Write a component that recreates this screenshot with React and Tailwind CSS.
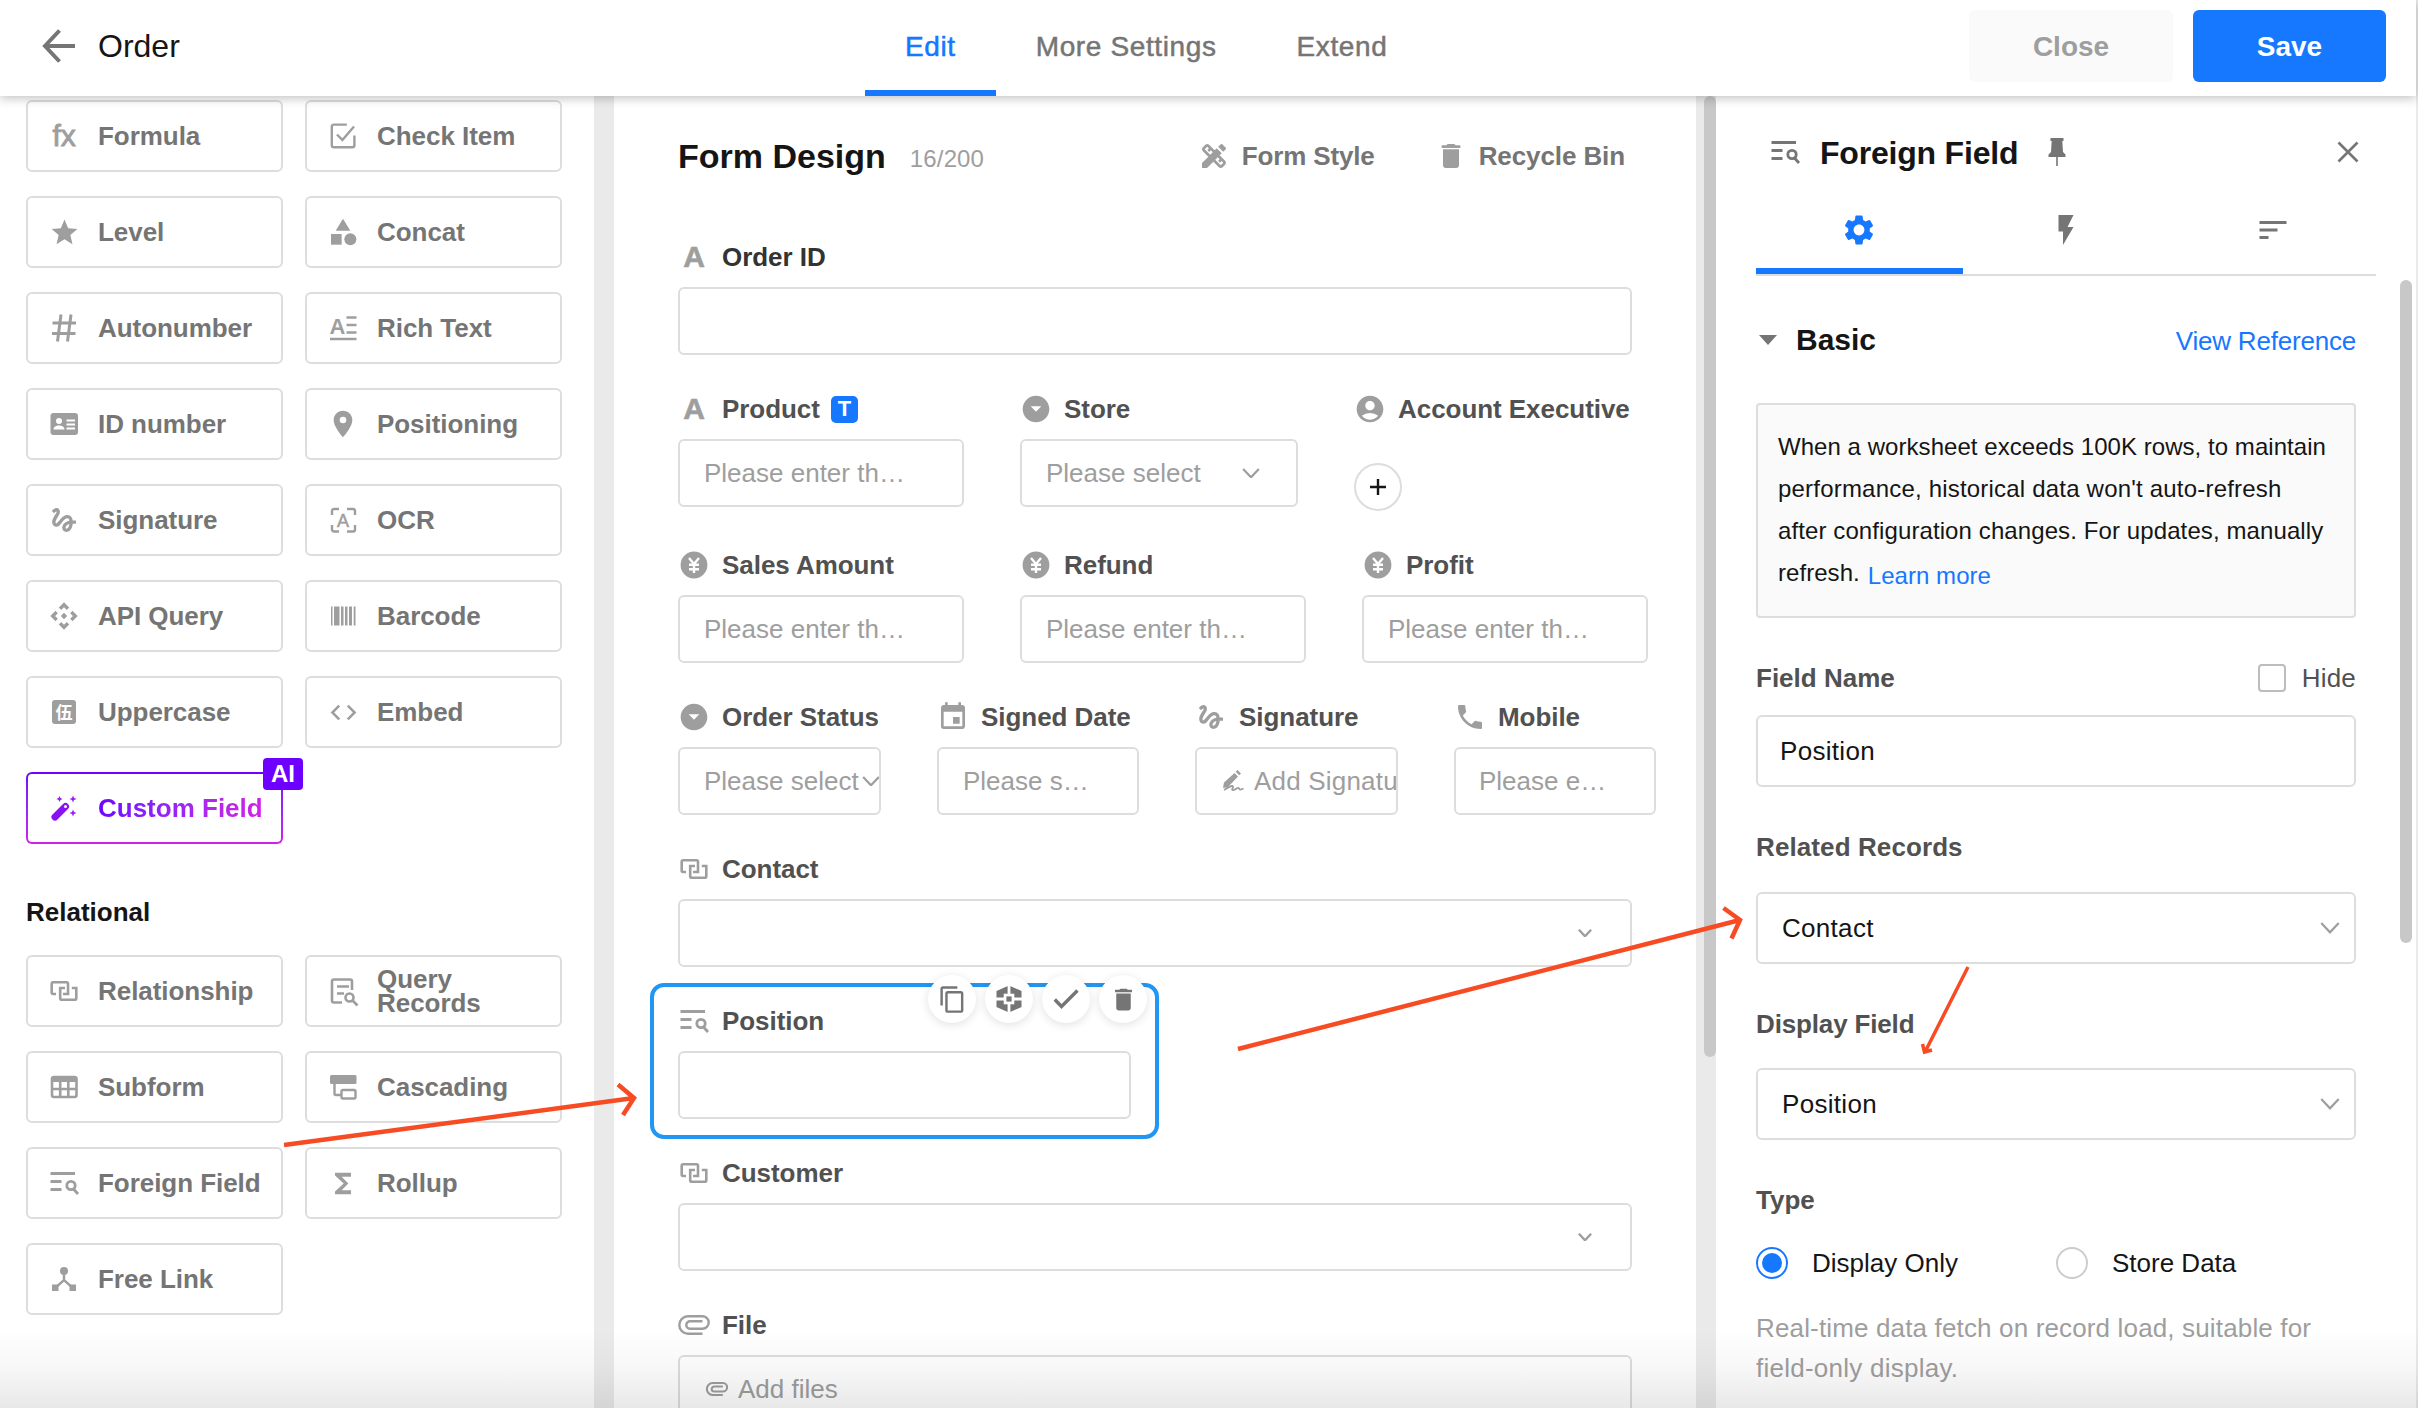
import React, { useState } from "react";
import clsx from "clsx";
import {
  MdAccountCircle,
  MdArrowDropDownCircle,
  MdCategory,
  MdCode,
  MdContentCopy,
  MdDelete,
  MdDesignServices,
  MdEvent,
  MdFlashOn,
  MdFunctions,
  MdGesture,
  MdPhone,
  MdPlace,
  MdSettings,
  MdSort,
  MdStar,
} from "react-icons/md";

const Svg = ({ w = 32, h = 32, children, ...rest }) => (
  <svg width={w} height={h} viewBox={`0 0 ${w} ${h}`} fill="none" stroke="currentColor" strokeWidth="2.6" className="shrink-0" {...rest}>
    {children}
  </svg>
);

const FxIcon = () => <span className="text-[30px] leading-8 [-webkit-text-stroke:0.9px]">fx</span>;

const LetterIcon = () => <span className="text-[30px] leading-8 font-bold [-webkit-text-stroke:0.6px]">A</span>;

const CheckItemIcon = () => (
  <Svg strokeWidth="2.4">
    <path d="M20 5.2H7a2 2 0 0 0-2 2v18.600a2 2 0 0 0 2 2h18.600a2 2 0 0 0 2-2V16" transform="translate(-.2 -.6)" />
    <path d="M10 14.500l5.400 5.500L27 6.500" />
  </Svg>
);

const HashIcon = () => (
  <Svg strokeWidth="3">
    <path d="M13 2.500l-3.500 27M23 2.500l-3.500 27M4.500 11h23.500M4 21.500h23.500" />
  </Svg>
);

const RichTextIcon = () => (
  <Svg>
    <text x="2.500" y="22" fontSize="22" fontWeight="bold" fill="currentColor" stroke="none">A</text>
    <path d="M19.500 5.500h10M19.500 13h10M19.500 20.500h10M3 27h26.500" />
  </Svg>
);

const IdIcon = () => (
  <Svg stroke="none">
    <rect x="2.500" y="5" width="27.500" height="22" rx="3" fill="currentColor" />
    <circle cx="11" cy="13" r="3" fill="#fff" />
    <path d="M5.500 21.500c0-5.300 11-5.300 11 0z" fill="#fff" />
    <path d="M18.500 12.500H27M18.500 16.500H27M18.500 20.500H27" stroke="#fff" strokeWidth="1.800" />
  </Svg>
);

const OcrIcon = () => (
  <Svg strokeWidth="2.4">
    <path d="M12 5H7a2 2 0 0 0-2 2v4M20 5h6a2 2 0 0 1 2 2v4M12 27.500H7a2 2 0 0 1-2-2V21M20 27.500h6a2 2 0 0 0 2-2V21" />
    <text x="10" y="22.500" fontSize="18" fill="currentColor" stroke="currentColor" strokeWidth=".5">A</text>
  </Svg>
);

const ApiIcon = () => (
  <Svg strokeWidth="3.4">
    <path d="M12 8.700l4-4 4 4M12 23.300l4 4 4-4M8.700 12l-4 4 4 4M23.300 12l4 4-4 4" />
    <path d="M16 12.800l3.200 3.200-3.200 3.200-3.200-3.200z" fill="currentColor" stroke="none" />
  </Svg>
);

const BarcodeIcon = () => (
  <Svg stroke="none" fill="currentColor">
    <path d="M4 6.500h1.500v19H4zM7 6.500h5.500v19H7zM14 6.500h2.500v19H14zM18 6.500h2.500v19H18zM22 6.500h3v19h-3zM26.700 6.500h1.800v19h-1.800z" />
  </Svg>
);

const UppercaseIcon = () => (
  <span className="flex size-6 items-center justify-center rounded-[3px] bg-[#9e9e9e] font-['Noto_Sans_CJK_SC',sans-serif] text-[17px] leading-6 font-bold text-white">
    伍
  </span>
);

const WandIcon = () => (
  <svg width="32" height="32" viewBox="0 0 32 32" className="shrink-0">
    <path d="M7 25L17.500 14.500" stroke="#8a10f5" strokeWidth="7" strokeLinecap="round" />
    <circle cx="17.500" cy="14.500" r="1.500" fill="#fff" />
    <path
      d="M11.500 4l.9 2.100L14.500 7l-2.100.9-.9 2.100-.9-2.100L8.500 7l2.100-.9zM25 3.500l1 2.500 2.500 1-2.500 1-1 2.500-1-2.500-2.500-1 2.500-1zM25 17.500l1 2.500 2.500 1-2.500 1-1 2.500-1-2.500-2.500-1 2.500-1z"
      fill="#9d18f0"
    />
  </svg>
);

const RelationIcon = () => (
  <Svg w={28} h={20} strokeWidth="2.600">
    <path d="M6 13H3.200a1.500 1.500 0 0 1-1.500-1.500V2.800a1.500 1.500 0 0 1 1.500-1.500h13.300A1.500 1.500 0 0 1 18 2.800V13h-5" />
    <path d="M15 7h-4.800v10.200a1.500 1.500 0 0 0 1.500 1.500h13.100a1.500 1.500 0 0 0 1.500-1.500V7h-4.500" />
  </Svg>
);

const QueryIcon = () => (
  <Svg strokeWidth="2.6">
    <path d="M15 27.500H7a2 2 0 0 1-2-2V6.500a2 2 0 0 1 2-2h16a2 2 0 0 1 2 2V15M10 11.500h12M10 18.500h7" />
    <circle cx="22.500" cy="22.500" r="4" />
    <path d="M25.500 25.500l5 5" />
  </Svg>
);

const GridIcon = () => (
  <Svg strokeWidth="2.600">
    <rect x="4" y="6" width="24.500" height="20" rx="2" />
    <path d="M4 8.500h24.500" strokeWidth="5" />
    <path d="M4 18h24.500M12.200 10v16M20.300 10v16" />
  </Svg>
);

const CascadeIcon = () => (
  <Svg strokeWidth="2.4">
    <rect x="3" y="4" width="26.500" height="9" rx="1.500" fill="currentColor" stroke="none" />
    <path d="M7.500 12v10.500a1.500 1.500 0 0 0 1.500 1.500h5" />
    <rect x="14.500" y="19" width="14" height="8.500" rx="1.500" />
  </Svg>
);

const ForeignIcon = () => (
  <Svg strokeWidth="2.800">
    <path d="M2.500 6.500h24.500M2.500 14.500h11M2.500 22.500h11" />
    <circle cx="23" cy="18.500" r="4.200" />
    <path d="M25.500 22l4.500 5" />
  </Svg>
);

const FreeLinkIcon = () => (
  <Svg stroke="none" fill="currentColor">
    <circle cx="16" cy="8" r="4" />
    <path d="M16 10v8.500M6 26l10-9 10 9" stroke="currentColor" strokeWidth="2.400" fill="none" />
    <path d="M4 21.500h6.500V28H4zM21.500 21.500H28V28h-6.500z" />
  </Svg>
);

const YenIcon = () => (
  <Svg stroke="none">
    <circle cx="16" cy="16" r="13.400" fill="currentColor" />
    <path d="M11 9l5 6 5-6M16 15v9M11 15.700h10M11 20.200h10" stroke="#fff" strokeWidth="2.400" />
  </Svg>
);

const ClipIcon = ({ w = 32, h = 20 }) => (
  <svg width={w} height={h} viewBox="0 0 32 20" fill="none" stroke="currentColor" strokeWidth={w < 30 ? 3 : 2.4} className="shrink-0">
    <path d="M24.500 18.700H10A8.700 8.700 0 0 1 10 1.300h14.500a6.200 6.200 0 0 1 0 12.400H12a3.700 3.700 0 0 1 0-7.400h12.500" />
  </svg>
);

const SignPenIcon = () => (
  <Svg w={24} h={24} stroke="none" fill="currentColor">
    <path d="M1 19l1-5.500L12.500 4l3.500 3.500L5.800 18.300zM13.700 2.800L15.500 1l3.500 3.500-1.800 1.800z" />
    <path d="M2 21c5-3 8-5 9-3.500s-2.500 3 0 3.500 4-3 5.500-2 .5 3 5 .5" stroke="currentColor" strokeWidth="1.800" fill="none" />
  </Svg>
);

const PinIcon = () => (
  <svg width="18" height="28" viewBox="0 0 18 28" className="shrink-0" fill="currentColor">
    <path d="M2.500 0h13v3h-1.200l.7 11 2.500 2.500V19H.5v-2.500L3 14l.7-11H2.500zM8.200 18h1.600v10H8.200z" />
  </svg>
);

const HexIcon = () => (
  <svg width="26" height="28" viewBox="0 0 26 28" className="shrink-0">
    <path d="M13 .5L25.500 6v16L13 27.500.5 22V6z" fill="currentColor" />
    <path d="M13 0v28M0 14h26" stroke="#fff" strokeWidth="2.800" />
    <rect x="7.700" y="8.700" width="10.600" height="10.600" fill="#fff" />
    <rect x="10.400" y="11.400" width="5.200" height="5.200" fill="currentColor" />
  </svg>
);

const CheckIcon = () => (
  <Svg w={26} h={22} strokeWidth="3.400">
    <path d="M1.800 11.500L8.500 18.500L24.500 2.500" />
  </Svg>
);

const Chevron = ({ w = 18, stroke = 2.2 }) => (
  <svg width={w} height={w * 0.6} viewBox="0 0 18 11" fill="none" stroke="#9e9e9e" strokeWidth={(stroke * 18) / w} className="shrink-0">
    <path d="M1 1l8 8.500L17 1" />
  </svg>
);

const basicTools = [
  { icon: <FxIcon />, label: "Formula" },
  { icon: <CheckItemIcon />, label: "Check Item" },
  { icon: <MdStar size={31} />, label: "Level" },
  { icon: <MdCategory size={32} />, label: "Concat" },
  { icon: <HashIcon />, label: "Autonumber" },
  { icon: <RichTextIcon />, label: "Rich Text" },
  { icon: <IdIcon />, label: "ID number" },
  { icon: <MdPlace size={32} />, label: "Positioning" },
  { icon: <MdGesture size={32} />, label: "Signature" },
  { icon: <OcrIcon />, label: "OCR" },
  { icon: <ApiIcon />, label: "API Query" },
  { icon: <BarcodeIcon />, label: "Barcode" },
  { icon: <UppercaseIcon />, label: "Uppercase" },
  { icon: <MdCode size={31} />, label: "Embed" },
];

const relationalTools = [
  { icon: <RelationIcon />, label: "Relationship" },
  { icon: <QueryIcon />, label: "Query Records" },
  { icon: <GridIcon />, label: "Subform" },
  { icon: <CascadeIcon />, label: "Cascading" },
  { icon: <ForeignIcon />, label: "Foreign Field" },
  { icon: <MdFunctions size={33} />, label: "Rollup" },
  { icon: <FreeLinkIcon />, label: "Free Link" },
];

const ToolButton = ({ icon, label }) => (
  <button className="flex h-[72px] items-center gap-[18px] rounded-md border-2 border-[#dddddd] bg-white pl-5 text-left font-bold tracking-[-0.05px] text-[#757575]">
    <span className="flex w-8 shrink-0 justify-center font-normal text-[#9e9e9e]">{icon}</span>
    <span className="leading-6">{label}</span>
  </button>
);

const CustomFieldButton = () => (
  <button className="relative h-[72px] rounded-md bg-linear-to-b from-[#6e00ff] to-[#cf22e6] p-0.5 text-left font-bold">
    <span className="flex h-full items-center gap-[18px] rounded-[4px] bg-white pl-5">
      <WandIcon />
      <span className="bg-linear-to-r from-[#6e00ff] to-[#cf22e6] bg-clip-text whitespace-nowrap text-transparent">Custom Field</span>
    </span>
    <span className="absolute -top-[14px] -right-5 flex h-8 w-10 items-center justify-center rounded-[4px] bg-[#6e00ff] text-2xl text-white">
      AI
    </span>
  </button>
);

const Sidebar = () => (
  <aside className="h-full w-[594px] shrink-0 bg-white px-[26px] pt-1">
    <div className="grid w-[536px] grid-cols-2 gap-x-[22px] gap-y-6">
      {basicTools.map((tool) => (
        <ToolButton key={tool.label} {...tool} />
      ))}
      <CustomFieldButton />
    </div>
    <h3 className="mt-[50px] mb-[25px] h-9 leading-9 font-bold text-[#151515]">Relational</h3>
    <div className="grid w-[536px] grid-cols-2 gap-x-[22px] gap-y-6">
      {relationalTools.map((tool) => (
        <ToolButton key={tool.label} {...tool} />
      ))}
    </div>
  </aside>
);

const Field = ({ icon, label, badge, dark, className, children }) => (
  <div className={clsx("shrink-0", className)}>
    <div
      className={clsx(
        "mb-2.5 flex h-10 items-center gap-3 font-bold tracking-[-0.05px] whitespace-nowrap",
        dark ? "text-[#333333]" : "text-[#515151]"
      )}
    >
      <span className="flex w-8 shrink-0 items-center justify-center text-[#9e9e9e]">{icon}</span>
      {label}
      {badge}
    </div>
    {children}
  </div>
);

const Box = ({ className, children }) => (
  <div className={clsx("flex h-[68px] items-center overflow-hidden rounded-md border-2 border-[#dddddd] bg-white px-6 whitespace-nowrap text-[#9e9e9e]", className)}>
    {children}
  </div>
);

const RoundButton = ({ children }) => (
  <span className="flex size-12 items-center justify-center rounded-full bg-white text-[#757575] shadow-[0_2px_10px_rgba(0,0,0,0.12)]">
    {children}
  </span>
);

const FormCanvas = () => (
  <main className="h-full w-[1082px] shrink-0 overflow-hidden bg-white pl-16">
    <div className="mt-10 flex h-10 w-[947px] items-center">
      <h2 className="text-[34px] leading-10 font-bold text-[#151515]">Form Design</h2>
      <span className="ml-6 pt-1.5 text-2xl tracking-[0.15px] text-[#9e9e9e]">16/200</span>
      <div className="ml-auto flex items-center font-bold text-[#757575]">
        <MdDesignServices size={32} className="mr-3 text-[#9e9e9e]" />
        <span className="tracking-[-0.15px]">Form Style</span>
        <MdDelete size={32} className="mr-3 ml-[60px] text-[#9e9e9e]" />
        <span className="tracking-[-0.1px]">Recycle Bin</span>
      </div>
    </div>

    <div className="mt-[61px] flex w-[954px] flex-col gap-[34px]">
      <Field icon={<LetterIcon />} label="Order ID" dark>
        <Box />
      </Field>

      <div className="flex h-[122px] gap-14">
        <Field
          icon={<LetterIcon />}
          label="Product"
          className="w-[286px]"
          badge={<span className="-ml-px flex size-[27px] items-center justify-center rounded-[5px] bg-[#1677ff] text-[22px] leading-none text-white">T</span>}
        >
          <Box>Please enter th…</Box>
        </Field>
        <Field icon={<MdArrowDropDownCircle size={32} />} label="Store" className="w-[278px]">
          <Box className="justify-between pr-9">
            Please select
            <Chevron />
          </Box>
        </Field>
        <Field icon={<MdAccountCircle size={32} />} label="Account Executive">
          <span className="mt-[34px] flex size-12 items-center justify-center rounded-full border-2 border-[#dddddd] text-[#151515]">
            <Svg w={18} h={18} strokeWidth="2.4">
              <path d="M9 1v16M1 9h16" />
            </Svg>
          </span>
        </Field>
      </div>

      <div className="flex gap-14">
        {["Sales Amount", "Refund", "Profit"].map((label) => (
          <Field key={label} icon={<YenIcon />} label={label} className="w-[286px]">
            <Box>Please enter th…</Box>
          </Field>
        ))}
      </div>

      <div className="flex gap-14">
        <Field icon={<MdArrowDropDownCircle size={32} />} label="Order Status" className="w-[203px]">
          <Box className="pr-0">
            <span className="mr-[3px]">Please select</span>
            <Chevron />
          </Box>
        </Field>
        <Field icon={<MdEvent size={34} />} label="Signed Date" className="w-[202px]">
          <Box>Please s…</Box>
        </Field>
        <Field icon={<MdGesture size={32} />} label="Signature" className="w-[203px]">
          <Box className="gap-2 pr-0 pl-[25px] tracking-[0.2px]">
            <SignPenIcon />
            Add Signature
          </Box>
        </Field>
        <Field icon={<MdPhone size={32} />} label="Mobile" className="w-[202px]">
          <Box className="pl-[23px]">Please e…</Box>
        </Field>
      </div>

      <Field icon={<RelationIcon />} label="Contact">
        <Box className="justify-end pr-[38px]">
          <Chevron w={14} stroke={2.4} />
        </Box>
      </Field>

      <div className="relative -mx-7 -mt-[18px] -mb-5 w-[509px] rounded-[14px] border-4 border-[#2196f3] px-6 pt-3.5 pb-4">
        <Field icon={<ForeignIcon />} label="Position">
          <Box />
        </Field>
        <div className="absolute -top-3 right-2 flex gap-[9px]">
          <RoundButton>
            <MdContentCopy size={29} />
          </RoundButton>
          <RoundButton>
            <HexIcon />
          </RoundButton>
          <RoundButton>
            <CheckIcon />
          </RoundButton>
          <RoundButton>
            <MdDelete size={29} />
          </RoundButton>
        </div>
      </div>

      <Field icon={<RelationIcon />} label="Customer">
        <Box className="justify-end pr-[38px]">
          <Chevron w={14} stroke={2.4} />
        </Box>
      </Field>

      <Field icon={<ClipIcon />} label="File">
        <Box className="gap-2.5 pl-[26px]">
          <ClipIcon w={22} h={14} />
          Add files
        </Box>
      </Field>
    </div>
  </main>
);

const Select = ({ value }) => (
  <div className="flex h-[72px] items-center justify-between rounded-md border-2 border-[#dddddd] bg-white pr-3.5 pb-px pl-6 tracking-[0.3px] text-[#151515]">
    {value}
    <Chevron w={20} />
  </div>
);

const Radio = ({ checked, label, onClick }) => (
  <button className="flex w-[300px] items-center gap-6 text-[#151515]" onClick={onClick}>
    <span className={clsx("flex size-8 items-center justify-center rounded-full border-2", checked ? "border-[#1677ff]" : "border-[#cccccc]")}>
      {checked && <span className="size-5 rounded-full bg-[#1677ff]" />}
    </span>
    {label}
  </button>
);

const SettingsPanel = () => {
  const [tab, setTab] = useState(0);
  const [type, setType] = useState("display");

  return (
    <aside className="flex h-full w-[700px] shrink-0 bg-white pl-10">
      <div className="w-[620px] shrink-0 pt-8">
        <div className="flex h-12 w-[603px] items-center pl-[13px] text-[#757575]">
          <ForeignIcon />
          <h2 className="ml-[19px] pt-0.5 text-[32px] leading-10 font-bold tracking-[-0.2px] text-[#151515]">Foreign Field</h2>
          <span className="ml-[30px]">
            <PinIcon />
          </span>
          <Svg w={22} h={22} strokeWidth="2.600" className="ml-auto">
            <path d="M1.500 1.500l19 19M20.500 1.500l-19 19" />
          </Svg>
        </div>

        <div className="flex h-[100px] border-b-2 border-[#dddddd]">
          {[<MdSettings size={36} />, <MdFlashOn size={36} />, <MdSort size={36} />].map((icon, i) => (
            <button
              key={i}
              className={clsx(
                "flex flex-1 items-center justify-center border-b-[6px] pt-[15px]",
                tab === i ? "border-[#1677ff] text-[#1677ff]" : "border-transparent text-[#757575]"
              )}
              onClick={() => setTab(i)}
            >
              {icon}
            </button>
          ))}
        </div>

        <div className="w-[600px]">
          <div className="mt-11 flex h-10 items-center">
            <svg width="18" height="10" viewBox="0 0 18 10" fill="#757575" className="ml-[3px]">
              <path d="M0 0h18L9 10z" />
            </svg>
            <h3 className="ml-[19px] text-[30px] font-bold text-[#151515]">Basic</h3>
            <a className="mt-0.5 ml-auto tracking-[-0.2px] text-[#1677ff]">View Reference</a>
          </div>

          <div className="mt-[43px] h-[215px] rounded-[4px] border-2 border-[#dddddd] bg-[#fafafa] px-5 pt-[21px] text-2xl leading-[42px] tracking-[0.05px] whitespace-nowrap text-[#151515]">
            When a worksheet exceeds 100K rows, to maintain
            <br />
            <span className="tracking-[0.2px]">performance, historical data won't auto-refresh</span>
            <br />
            <span className="tracking-[0.1px]">after configuration changes. For updates, manually</span>
            <br />
            refresh.
            <a className="relative top-[3px] ml-2 text-[#1677ff]">Learn more</a>
          </div>

          <div className="mt-11 flex h-8 items-center font-bold text-[#515151]">
            Field Name
            <span className="ml-auto size-7 rounded-[4px] border-2 border-[#bdbdbd]" />
            <span className="ml-4 font-normal tracking-[0.2px]">Hide</span>
          </div>
          <div className="mt-[21px] flex h-[72px] items-center rounded-md border-2 border-[#dddddd] pl-[22px] tracking-[0.3px] text-[#151515]">
            Position
          </div>

          <div className="mt-11 mb-[29px] h-8 leading-8 font-bold tracking-[0.1px] text-[#515151]">Related Records</div>
          <Select value="Contact" />

          <div className="mt-11 mb-7 h-8 leading-8 font-bold tracking-[-0.15px] text-[#515151]">Display Field</div>
          <Select value="Position" />

          <div className="mt-11 h-8 leading-8 font-bold text-[#515151]">Type</div>
          <div className="mt-[31px] flex h-8 items-center">
            <Radio label="Display Only" checked={type === "display"} onClick={() => setType("display")} />
            <Radio label="Store Data" checked={type === "store"} onClick={() => setType("store")} />
          </div>
          <p className="mt-[29px] leading-10 tracking-[0.15px] whitespace-nowrap text-[#9e9e9e]">
            Real-time data fetch on record load, suitable for
            <br />
            <span className="tracking-[0.25px]">field-only display.</span>
          </p>
        </div>
      </div>
      <div className="mt-[184px] ml-6 h-[663px] w-3 shrink-0 rounded-full bg-[#c8c8c8]" />
    </aside>
  );
};

const Header = () => {
  const [active, setActive] = useState("Edit");

  return (
    <header className="relative z-10 flex h-24 w-[2416px] shrink-0 items-center bg-white shadow-[0_2px_10px_rgba(0,0,0,0.26)]">
      <div className="flex w-[865px] items-center pb-1 pl-[42px]">
        <Svg w={34} h={34} strokeWidth="4" className="text-[#757575]">
          <path d="M17.500 1.500L3 17l14.500 15.500M3 17h30" />
        </Svg>
        <h1 className="ml-[22px] text-[32px] leading-10 text-[#151515]">Order</h1>
      </div>
      <nav className="flex h-full text-[28px] tracking-[0.62px] [-webkit-text-stroke:0.5px]">
        {["Edit", "More Settings", "Extend"].map((item) => (
          <button
            key={item}
            className={clsx(
              "border-b-[6px] px-10 pt-1",
              active === item ? "border-[#1677ff] text-[#1677ff]" : "border-transparent text-[#757575]"
            )}
            onClick={() => setActive(item)}
          >
            {item}
          </button>
        ))}
      </nav>
      <div className="mr-[30px] mb-1 ml-auto flex gap-5 text-[28px] font-bold">
        <button className="h-[72px] w-[204px] rounded-md bg-[#fafafa] pt-0.5 text-[#9e9e9e]">Close</button>
        <button className="h-[72px] w-[193px] rounded-md bg-[#1677ff] pt-0.5 text-white">Save</button>
      </div>
    </header>
  );
};

// Red guide arrows drawn over the three columns
const Arrows = () => (
  <svg className="pointer-events-none absolute inset-0 z-20" width="2418" height="1408" fill="none" stroke="#f74b24">
    <path d="M284 1145L634 1098M618 1084.500L634 1098L623 1115" strokeWidth="4.500" />
    <path d="M1238 1049L1740 920M1723.500 908L1740 920L1731.500 938.500" strokeWidth="4.500" />
    <path d="M1968 967L1925 1052M1922.500 1044L1924.500 1052L1932 1050" strokeWidth="3.500" />
  </svg>
);

const App = () => {
  return (
    <div className="relative flex h-[1408px] w-[2418px] flex-col overflow-hidden bg-[#eaeaea] font-['Liberation_Sans',Arial,sans-serif] text-[26px] leading-8">
      <Header />
      <div className="flex min-h-0 flex-1">
        <Sidebar />
        <div className="w-5 shrink-0" />
        <FormCanvas />
        <div className="w-5 shrink-0 pl-2">
          <div className="h-[961px] w-3 rounded-full bg-[#c8c8c8]" />
        </div>
        <SettingsPanel />
      </div>
      <div className="pointer-events-none absolute inset-x-0 bottom-0 h-20 bg-linear-to-b from-transparent via-black/3 to-black/9" />
      <Arrows />
    </div>
  );
};

export default App;
